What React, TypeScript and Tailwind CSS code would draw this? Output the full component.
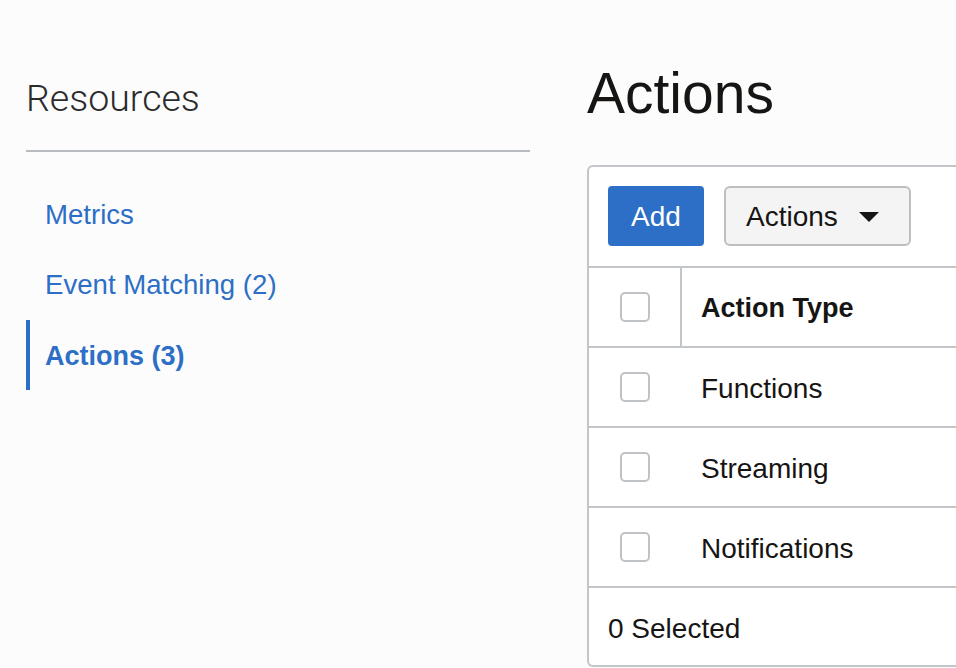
import { ReactNode } from "react";

const rows = ["Functions", "Streaming", "Notifications"];

function Checkbox() {
  return (
    <span className="block w-[30px] h-[30px] rounded-[5px] border-2 border-[#bfc3c7] bg-white" />
  );
}

function Row({ children, header = false }: { children: ReactNode; header?: boolean }) {
  return (
    <div className="flex h-[80px] border-b-2 border-[#c2c6ca]">
      <div
        className={
          header
            ? "w-[93px] shrink-0 flex items-center justify-center border-r-2 border-[#c2c6ca]"
            : "w-[93px] shrink-0 flex items-center justify-center border-r-2 border-transparent"
        }
      >
        <Checkbox />
      </div>
      <div className="flex items-center pl-[19px] pt-[3px]">{children}</div>
    </div>
  );
}

export default function App() {
  return (
    <div
      className="h-[668px] w-[956px] overflow-hidden bg-[#fcfcfc] flex pl-[26px] pt-[65px] text-[#161513]"
      style={{ fontFamily: '"Liberation Sans", Arial, sans-serif' }}
    >
      {/* Sidebar */}
      <div className="w-[504px] shrink-0">
        <h2
          className="mt-[15px] text-[37.5px] leading-[37px] font-light text-[#2b2b2b]"
          style={{ fontFamily: 'Roboto, "Liberation Sans", sans-serif' }}
        >
          Resources
        </h2>
        <div className="mt-[33px] h-[2px] bg-[#b8bcc1]" />
        <nav className="mt-[28px] flex flex-col text-[27.6px] text-[#2d6fc6]">
          <a className="h-[70px] flex items-center pl-[19px]">Metrics</a>
          <a className="h-[70px] flex items-center pl-[19px]">Event Matching (2)</a>
          <a className="h-[70px] flex items-center pl-[15px] pt-[3px] border-l-4 border-[#2d6fc6] font-bold text-[27px]">
            Actions (3)
          </a>
        </nav>
      </div>

      {/* Main */}
      <div className="ml-[57px] shrink-0">
        <h1 className="text-[57px] leading-[56px]">Actions</h1>
        <div className="mt-[44px] w-[520px] bg-white border-2 border-r-0 border-[#c2c6ca] rounded-l-[6px]">
          <div className="flex gap-[20px] px-[19px] pt-[19px] pb-[20px] border-b-2 border-[#c2c6ca]">
            <button className="w-[96px] h-[60px] rounded-[4px] bg-[#2d6fc6] text-white text-[28px] pt-[2px]">
              Add
            </button>
            <button className="w-[187px] h-[60px] rounded-[6px] border-2 border-[#bcbfc2] bg-[#f4f4f4] text-[28px] flex items-center pl-[20px] pt-[2px]">
              Actions
              <svg className="ml-[21px]" width="20" height="10" viewBox="0 0 20 10">
                <path d="M0 0 L20 0 L10 10 Z" fill="#161513" />
              </svg>
            </button>
          </div>
          <Row header>
            <span className="text-[27px] font-bold">Action Type</span>
          </Row>
          {rows.map((r) => (
            <Row key={r}>
              <span className="text-[28px]">{r}</span>
            </Row>
          ))}
          <div className="h-[77px] flex items-center px-[19px] pt-[4px] text-[28px]">0 Selected</div>
        </div>
      </div>
    </div>
  );
}
